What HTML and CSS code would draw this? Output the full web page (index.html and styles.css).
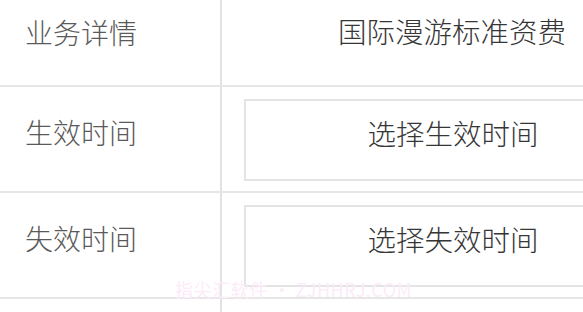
FILE: index.html
```html
<!DOCTYPE html>
<html lang="zh">
<head>
<meta charset="utf-8">
<link rel="stylesheet" href="styles.css">
</head>
<body>
<div class="form">
  <div class="row row-first">
    <div class="label">业务详情</div>
    <div class="value"><span class="value-text">国际漫游标准资费</span></div>
  </div>
  <div class="row">
    <div class="label">生效时间</div>
    <div class="value"><div class="picker">选择生效时间</div></div>
  </div>
  <div class="row">
    <div class="label">失效时间</div>
    <div class="value"><div class="picker">选择失效时间</div></div>
  </div>
  <div class="row row-last">
    <div class="label"></div>
    <div class="value"></div>
  </div>
  <div class="watermark">指尖汇软件 · ZJHHRJ.COM</div>
</div>
</body>
</html>
```

FILE: styles.css
```css
html, body {
  margin: 0;
  padding: 0;
  background: #ffffff;
  overflow: hidden;
}
body {
  width: 583px;
  height: 312px;
  font-family: "Noto Sans CJK SC", "Noto Sans", sans-serif;
}
.form {
  position: relative;
  display: flex;
  flex-direction: column;
  height: 312px;
  overflow: hidden;
}
.row {
  display: flex;
  height: 104px;
  flex: none;
  border-bottom: 2px solid #e6e6e6;
}
.row-first {
  height: 85px;
}
.row-last {
  border-bottom: none;
  height: 11px;
}
.label {
  width: 222px;
  flex: none;
  box-sizing: border-box;
  border-right: 2px solid #e2e2e2;
  padding: 31px 0 0 25px;
  font-size: 28px;
  line-height: 28px;
  font-weight: 300;
  color: #5a5a5a;
}
.row-first .label {
  padding-top: 18px;
}
.value {
  flex: 1;
  min-width: 0;
  overflow: hidden;
  display: flex;
  flex-direction: column;
  padding-left: 22px;
}
.row-first .value {
  align-items: flex-end;
  padding: 17px 17px 0 0;
}
.value-text {
  font-size: 28.5px;
  line-height: 28px;
  font-weight: 300;
  color: #363636;
}
.picker {
  margin-top: 12px;
  width: 418px;
  height: 82px;
  box-sizing: border-box;
  border: 2px solid #e4e4e4;
  text-align: center;
  padding-top: 18px;
  font-size: 28.5px;
  line-height: 28px;
  font-weight: 300;
  color: #363636;
  flex: none;
}
.watermark {
  position: absolute;
  left: 175px;
  top: 279px;
  font-size: 18px;
  line-height: 20px;
  letter-spacing: 0.6px;
  color: #fcebf8;
  white-space: nowrap;
}
```
